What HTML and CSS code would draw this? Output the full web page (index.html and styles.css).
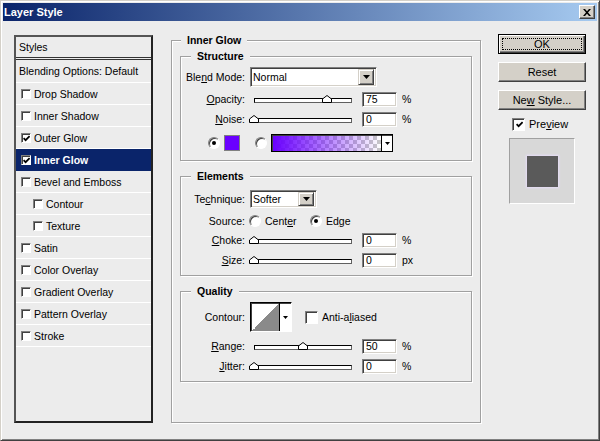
FILE: index.html
```html
<!DOCTYPE html>
<html>
<head>
<meta charset="utf-8">
<title>Layer Style</title>
<link rel="stylesheet" href="styles.css">
</head>
<body>
<div class="window">
  <div class="titlebar">
    <span class="title">Layer Style</span>
    <span class="close"><svg width="8" height="7" viewBox="0 0 8 7"><path d="M0 0h2l2 2.2L6 0h2L5 3.5 8 7H6L4 4.8 2 7H0l3-3.5z"/></svg></span>
  </div>
  <div class="content">
    <div class="list">
      <div class="li head">Styles</div>
      <div class="li blend">Blending Options: Default</div>
      <div class="li"><span class="cb"></span>Drop Shadow</div>
      <div class="li"><span class="cb"></span>Inner Shadow</div>
      <div class="li"><span class="cb"><svg width="7" height="7" viewBox="0 0 7 7"><path d="M0.6 3.2 2.6 5.2 6.6 1.2" fill="none" stroke="#000" stroke-width="1.7"/></svg></span>Outer Glow</div>
      <div class="li active"><span class="cb"><svg width="7" height="7" viewBox="0 0 7 7"><path d="M0.6 3.2 2.6 5.2 6.6 1.2" fill="none" stroke="#000" stroke-width="1.7"/></svg></span>Inner Glow</div>
      <div class="li"><span class="cb"></span>Bevel and Emboss</div>
      <div class="li sub"><span class="cb"></span>Contour</div>
      <div class="li sub"><span class="cb"></span>Texture</div>
      <div class="li"><span class="cb"></span>Satin</div>
      <div class="li"><span class="cb"></span>Color Overlay</div>
      <div class="li"><span class="cb"></span>Gradient Overlay</div>
      <div class="li"><span class="cb"></span>Pattern Overlay</div>
      <div class="li"><span class="cb"></span>Stroke</div>
    </div>

    <div class="grp outer">
      <div class="gt">Inner Glow</div>

      <div class="grp inner structure">
        <div class="gt">Structure</div>
        <div class="row mt4">
          <span class="lbl">Ble<u>n</u>d Mode:</span>
          <div class="sel sunken sel-blend"><span class="val">Normal</span><span class="dd"><svg width="7" height="4" viewBox="0 0 7 4"><path d="M0 0h7L3.5 4z"/></svg></span></div>
        </div>
        <div class="row mt2">
          <span class="lbl"><u>O</u>pacity:</span>
          <div class="slider"><span class="track"></span><svg class="thumb" style="left:72px" width="10" height="8" viewBox="0 0 10 8"><path d="M0.5 7.5V4L5 0.5 9.5 4V7.5Z" fill="#fff" stroke="#000"/></svg></div>
          <span class="num sunken">75</span><span class="unit">%</span>
        </div>
        <div class="row">
          <span class="lbl"><u>N</u>oise:</span>
          <div class="slider"><span class="track"></span><svg class="thumb" style="left:-1px" width="10" height="8" viewBox="0 0 10 8"><path d="M0.5 7.5V4L5 0.5 9.5 4V7.5Z" fill="#fff" stroke="#000"/></svg></div>
          <span class="num sunken">0</span><span class="unit">%</span>
        </div>
        <div class="row mt4 colorrow">
          <span class="radio on"></span>
          <span class="swatch"></span>
          <span class="radio r2"></span>
          <div class="grad"><span class="fill"></span><span class="gdd"><svg width="5" height="3" viewBox="0 0 5 3"><path d="M0 0h5L2.5 3z"/></svg></span></div>
        </div>
      </div>

      <div class="grp inner elements">
        <div class="gt">Elements</div>
        <div class="row mt6">
          <span class="lbl">Te<u>c</u>hnique:</span>
          <div class="sel sunken sel-tech"><span class="val">Softer</span><span class="dd small"><svg width="7" height="4" viewBox="0 0 7 4"><path d="M0 0h7L3.5 4z"/></svg></span></div>
        </div>
        <div class="row mt2 src">
          <span class="lbl lbl-src">Source:</span>
          <span class="radio"></span><span class="opt opt-w">Cent<u>e</u>r</span>
          <span class="radio on"></span><span class="opt">Ed<u>g</u>e</span>
        </div>
        <div class="row">
          <span class="lbl"><u>C</u>hoke:</span>
          <div class="slider"><span class="track"></span><svg class="thumb" style="left:-1px" width="10" height="8" viewBox="0 0 10 8"><path d="M0.5 7.5V4L5 0.5 9.5 4V7.5Z" fill="#fff" stroke="#000"/></svg></div>
          <span class="num sunken">0</span><span class="unit">%</span>
        </div>
        <div class="row">
          <span class="lbl"><u>S</u>ize:</span>
          <div class="slider"><span class="track"></span><svg class="thumb" style="left:-1px" width="10" height="8" viewBox="0 0 10 8"><path d="M0.5 7.5V4L5 0.5 9.5 4V7.5Z" fill="#fff" stroke="#000"/></svg></div>
          <span class="num sunken">0</span><span class="unit">px</span>
        </div>
      </div>

      <div class="grp inner quality">
        <div class="gt">Quality</div>
        <div class="row mt4 crow">
          <span class="lbl">Contour:</span>
          <div class="contour"><span class="curve"></span><span class="cdd"><svg width="5" height="3" viewBox="0 0 5 3"><path d="M0 0h5L2.5 3z"/></svg></span></div>
          <span class="cb big aa"></span><span class="opt">Anti-a<u>l</u>iased</span>
        </div>
        <div class="row mt4">
          <span class="lbl"><u>R</u>ange:</span>
          <div class="slider"><span class="track"></span><svg class="thumb" style="left:48px" width="10" height="8" viewBox="0 0 10 8"><path d="M0.5 7.5V4L5 0.5 9.5 4V7.5Z" fill="#fff" stroke="#000"/></svg></div>
          <span class="num sunken">50</span><span class="unit">%</span>
        </div>
        <div class="row">
          <span class="lbl"><u>J</u>itter:</span>
          <div class="slider"><span class="track"></span><svg class="thumb" style="left:-1px" width="10" height="8" viewBox="0 0 10 8"><path d="M0.5 7.5V4L5 0.5 9.5 4V7.5Z" fill="#fff" stroke="#000"/></svg></div>
          <span class="num sunken">0</span><span class="unit">%</span>
        </div>
      </div>
    </div>

    <div class="side">
      <div class="btn def"><span>OK</span></div>
      <div class="btn"><span>Reset</span></div>
      <div class="btn"><span>Ne<u>w</u> Style...</span></div>
      <div class="prev"><span class="cb big"><svg width="7" height="7" viewBox="0 0 7 7"><path d="M0.6 3.2 2.6 5.2 6.6 1.2" fill="none" stroke="#000" stroke-width="1.7"/></svg></span><span>Pre<u>v</u>iew</span></div>
      <div class="pbox"><span class="sq"></span></div>
    </div>
  </div>
</div>
</body>
</html>
```

FILE: styles.css
```css
* { box-sizing: border-box; }
html, body { margin: 0; padding: 0; }
body {
  width: 600px; height: 441px; overflow: hidden;
  background: #ececec;
  font-family: "Liberation Sans", Arial, sans-serif;
  font-size: 10.5px; color: #000;
}
u { text-decoration: underline; text-underline-offset: 1px; }

.window {
  width: 600px; height: 441px;
  display: flex; flex-direction: column;
  background: #ececec;
  border: 1px solid; border-color: #d4d0c8 #404040 #404040 #d4d0c8;
  box-shadow: inset 1px 1px 0 #fff, inset -1px -1px 0 #808080;
  padding: 2px;
}
.titlebar {
  height: 18px; flex: none;
  display: flex; align-items: center; justify-content: space-between;
  padding: 0 2px 0 1px;
  background: linear-gradient(to right, #0a246a, #a6caf0);
}
.title { color: #fff; font-weight: bold; font-size: 11px; }
.close {
  width: 16px; height: 14px;
  background: #d4d0c8;
  border: 1px solid; border-color: #fff #404040 #404040 #fff;
  box-shadow: inset -1px -1px 0 #808080;
  display: flex; align-items: center; justify-content: center;
}
.close svg { display: block; }

.content { flex: 1; display: flex; align-items: flex-start; padding-left: 11px; }

/* style list */
.list {
  width: 139px; height: 388px; margin-top: 14px;
  border: 2px solid; border-color: #555 #222 #222 #555;
  display: flex; flex-direction: column;
}
.li {
  height: 22px; flex: none;
  display: flex; align-items: center; gap: 3px;
  padding-left: 5px;
  border-bottom: 1px solid #fff;
  white-space: nowrap;
}
.li.head { height: 23px; padding-left: 3px; border-bottom: 3px double #333; }
.li.blend { height: 23px; padding-left: 3px; }
.li.sub { padding-left: 17px; }
.li.active { background: #0a246a; color: #fff; font-weight: bold; border-bottom-color: #0a246a; }

.cb {
  width: 10px; height: 10px; flex: none;
  background: #fff;
  border: 1px solid; border-color: #808080 #fff #fff #808080;
  box-shadow: inset 1px 1px 0 #404040;
  display: flex; align-items: center; justify-content: center;
  padding: 1px 0 0 1px;
}
.cb svg { display: block; }
.cb.big { width: 13px; height: 13px; }

/* groups */
.grp {
  border: 1px solid #a0a0a0;
  box-shadow: inset 1px 1px 0 #fff, 1px 1px 0 #fff;
  display: flex; flex-direction: column;
}
.gt {
  align-self: flex-start;
  height: 13px; line-height: 13px;
  margin: -7px 0 0 10px; padding: 0 6px;
  background: #ececec; font-weight: bold;
}
.outer { width: 310px; height: 383px; margin: 19px 0 0 18px; }
.outer > .gt { margin-left: 9px; }
.inner { margin-left: 8px; margin-right: 8px; }
.structure { margin-top: 9px; padding-bottom: 7px; }
.elements { margin-top: 15px; padding-bottom: 5px; }
.quality { margin-top: 15px; padding-bottom: 5px; }

.row { display: flex; align-items: center; height: 20px; flex: none; white-space: nowrap; }
.mt2 { margin-top: 2px; }
.mt4 { margin-top: 4px; }
.mt6 { margin-top: 6px; }
.row.src { height: 19px; }
.row.crow { height: 30px; }
.lbl { width: 64px; flex: none; text-align: right; margin-right: 5px; }
.lbl-src { margin-right: 4px; }

.sunken {
  background: #fff;
  border: 1px solid; border-color: #808080 #fff #fff #808080;
  box-shadow: inset 1px 1px 0 #404040, inset -1px -1px 0 #d4d0c8;
}
.sel { display: flex; align-items: center; justify-content: space-between; padding: 2px; }
.sel-blend { width: 127px; height: 20px; }
.sel-tech { width: 67px; height: 18px; }
.dd {
  width: 16px; height: 16px;
  background: #d4d0c8;
  border: 1px solid; border-color: #d4d0c8 #404040 #404040 #d4d0c8;
  box-shadow: inset 1px 1px 0 #fff, inset -1px -1px 0 #808080;
  display: flex; align-items: center; justify-content: center;
}
.dd.small { height: 14px; }
.dd svg { display: block; }

.slider { position: relative; width: 102px; height: 20px; flex: none; }
.track {
  display: block; width: 98px; height: 5px;
  margin: 9px 0 0 4px;
  background: #fff;
  border: 1px solid #000; border-right-color: #606060; border-bottom-color: #606060;
}
.thumb { position: absolute; top: 6px; display: block; }

.num {
  width: 35px; height: 15px; flex: none;
  margin-left: 10px; padding-left: 3px;
  display: flex; align-items: center;
}
.unit { margin-left: 5px; }

.radio {
  width: 12px; height: 12px; flex: none;
  border-radius: 50%;
  background: #fff;
  border: 1px solid; border-color: #808080 #fff #fff #808080;
  box-shadow: inset 1px 1px 0 #404040;
  display: flex; align-items: center; justify-content: center;
}
.radio.on::after { content: ""; width: 4px; height: 4px; border-radius: 50%; background: #000; }
.colorrow .radio.on { margin-left: 27px; }
.swatch { width: 16px; height: 16px; margin-left: 4px; background: #6a00ff; border: 1px solid #808080; flex: none; }
.colorrow .r2 { margin-left: 15px; }
.grad {
  width: 122px; height: 18px; margin-left: 4px; flex: none;
  display: flex;
  border: 1px solid #000;
  box-shadow: inset 1px 1px 0 #404040;
  background: #fff;
}
.grad .fill {
  flex: 1; margin: 1px 0 0 1px;
  background-color: #fff;
  background-image:
    linear-gradient(to right, #6a00ff, rgba(106, 0, 255, 0)),
    linear-gradient(45deg, #c8c8c8 25%, transparent 25%, transparent 75%, #c8c8c8 75%),
    linear-gradient(45deg, #c8c8c8 25%, transparent 25%, transparent 75%, #c8c8c8 75%);
  background-size: 100% 100%, 8px 8px, 8px 8px;
  background-position: 0 0, 0 0, 4px 4px;
}
.grad .gdd { width: 11px; border-left: 1px solid #000; display: flex; align-items: center; justify-content: center; }
.grad svg, .cdd svg { display: block; }

.opt { margin-left: 4px; }
.opt-w { width: 45px; flex: none; }

.contour {
  width: 42px; height: 30px; flex: none;
  display: flex;
  border: 1px solid; border-color: #000 #fff #fff #000;
  box-shadow: inset 1px 1px 0 #404040;
  background: #fff;
}
.contour .curve { flex: 1; margin: 1px 0 0 1px; background: linear-gradient(to bottom right, #fff 50%, #8a8a8a 50%); }
.contour .cdd { width: 12px; border-left: 1px solid #000; display: flex; align-items: center; justify-content: center; }
.cb.aa { margin-left: 13px; }

/* right side */
.side { width: 88px; flex: none; margin: 13px 0 0 17px; display: flex; flex-direction: column; }
.btn {
  height: 20px; position: relative;
  display: flex; align-items: center; justify-content: center;
  background: #d4d0c8;
  border: 1px solid; border-color: #fff #404040 #404040 #fff;
  box-shadow: inset -1px -1px 0 #808080;
  font-size: 11px;
}
.btn + .btn { margin-top: 8px; }
.btn.def {
  border-color: #000;
  box-shadow: inset 1px 1px 0 #fff, inset -1px -1px 0 #404040, inset -2px -2px 0 #808080;
}
.btn.def::after { content: ""; position: absolute; inset: 3px; border: 1px dotted #000; }
.prev { display: flex; align-items: center; height: 16px; margin-top: 6px; padding-left: 14px; font-size: 11px; }
.prev .cb { margin-right: 4px; }
.pbox {
  width: 66px; height: 66px; margin: 6px 0 0 11px;
  border: 1px solid; border-color: #a0a0a0 #fff #fff #a0a0a0;
  background: #d8d8d8;
  display: flex; align-items: center; justify-content: center;
}
.pbox .sq { width: 31px; height: 31px; background: #5a5a5a; box-shadow: 0 0 2px 1px #e6dcf8; }
```
